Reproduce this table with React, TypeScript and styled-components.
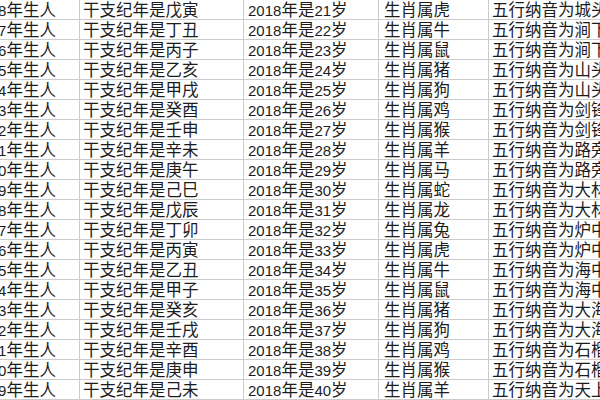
import React from 'react';
import styled, {createGlobalStyle} from 'styled-components';

type Row = {
    year: number
    ganzhi: string
    age: number
    animal: string
    nayin: string
};

const rows: Row[] = [
    {year: 1998, ganzhi: '戊寅', age: 21, animal: '虎', nayin: '城头土'},
    {year: 1997, ganzhi: '丁丑', age: 22, animal: '牛', nayin: '涧下水'},
    {year: 1996, ganzhi: '丙子', age: 23, animal: '鼠', nayin: '涧下水'},
    {year: 1995, ganzhi: '乙亥', age: 24, animal: '猪', nayin: '山头火'},
    {year: 1994, ganzhi: '甲戌', age: 25, animal: '狗', nayin: '山头火'},
    {year: 1993, ganzhi: '癸酉', age: 26, animal: '鸡', nayin: '剑锋金'},
    {year: 1992, ganzhi: '壬申', age: 27, animal: '猴', nayin: '剑锋金'},
    {year: 1991, ganzhi: '辛未', age: 28, animal: '羊', nayin: '路旁土'},
    {year: 1990, ganzhi: '庚午', age: 29, animal: '马', nayin: '路旁土'},
    {year: 1989, ganzhi: '己巳', age: 30, animal: '蛇', nayin: '大林木'},
    {year: 1988, ganzhi: '戊辰', age: 31, animal: '龙', nayin: '大林木'},
    {year: 1987, ganzhi: '丁卯', age: 32, animal: '兔', nayin: '炉中火'},
    {year: 1986, ganzhi: '丙寅', age: 33, animal: '虎', nayin: '炉中火'},
    {year: 1985, ganzhi: '乙丑', age: 34, animal: '牛', nayin: '海中金'},
    {year: 1984, ganzhi: '甲子', age: 35, animal: '鼠', nayin: '海中金'},
    {year: 1983, ganzhi: '癸亥', age: 36, animal: '猪', nayin: '大海水'},
    {year: 1982, ganzhi: '壬戌', age: 37, animal: '狗', nayin: '大海水'},
    {year: 1981, ganzhi: '辛酉', age: 38, animal: '鸡', nayin: '石榴木'},
    {year: 1980, ganzhi: '庚申', age: 39, animal: '猴', nayin: '石榴木'},
    {year: 1979, ganzhi: '己未', age: 40, animal: '羊', nayin: '天上火'},
];

export default function App() {
    return (
        <>
            <GlobalStyle/>
            <Viewport>
                <Sheet>
                    {rows.map((r) => (
                        <React.Fragment key={r.year}>
                            <Cell><Num>{r.year}</Num>年生人</Cell>
                            <Cell>干支纪年是{r.ganzhi}</Cell>
                            <Cell pad={4}><Num>2018</Num>年是<Num>{r.age}</Num>岁</Cell>
                            <Cell pad={5}>生肖属{r.animal}</Cell>
                            <Cell>五行纳音为{r.nayin}</Cell>
                        </React.Fragment>
                    ))}
                </Sheet>
            </Viewport>
        </>
    );
}

const GlobalStyle = createGlobalStyle`
  html, body {
    margin: 0;
    padding: 0;
    background: #fff;
  }
`;

const Viewport = styled.div`
  width: 600px;
  height: 400px;
  overflow: hidden;
  background: #fff;
`;

// first column is scrolled partly out of view, like the screenshot
const Sheet = styled.div`
  display: grid;
  grid-template-columns: 110px 164px 135px 110px 220px;
  grid-auto-rows: 20px;
  width: max-content;
  margin-left: -30px;
  font-family: "Noto Sans CJK SC", "Liberation Sans", sans-serif;
  font-size: 16.5px;
  color: #1c1c1c;
`;

const Cell = styled.div<{ pad?: number }>`
  box-sizing: border-box;
  border-right: 1px solid #cbcbcb;
  border-bottom: 1px solid #cbcbcb;
  padding-left: ${(p) => p.pad ?? 3}px;
  line-height: 19px;
  white-space: nowrap;
  overflow: hidden;
`;

const Num = styled.span`
  font-family: "Liberation Sans", Arial, sans-serif;
  font-size: 15px;
`;
